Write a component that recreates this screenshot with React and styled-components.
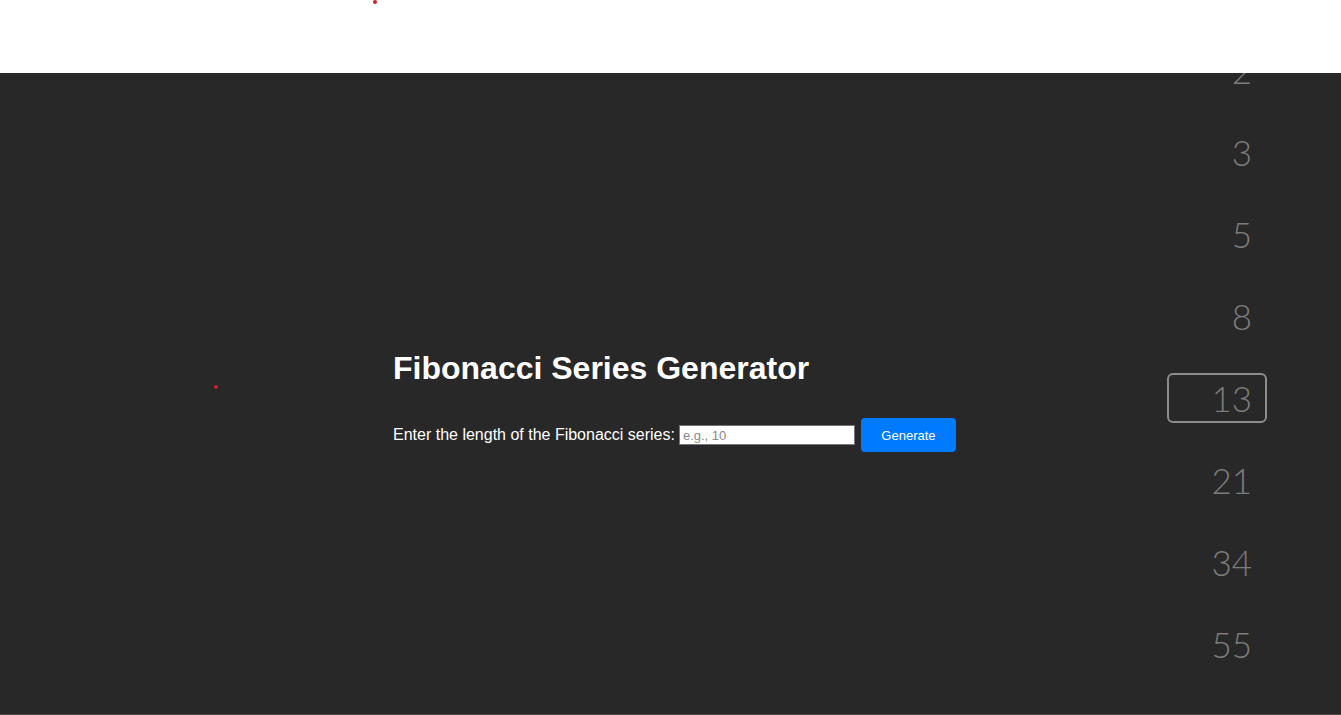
import React, { useState } from 'react';
import styled, { createGlobalStyle } from 'styled-components';

const GlobalStyle = createGlobalStyle`
  html, body {
    margin: 0;
    padding: 0;
    background: #ffffff;
    font-family: "Liberation Sans", Arial, sans-serif;
  }
`;

const series = [2, 3, 5, 8, 13, 21, 34, 55, 89];

const App = () => {
  const [length, setLength] = useState('');

  return (
    <>
      <GlobalStyle />
      <TopBar>
        <Dot $x={373} $y={0} />
      </TopBar>
      <Stage>
        <Dot $x={214} $y={312} />
        <Content>
          <Title>Fibonacci Series Generator</Title>
          <FormRow>
            <Label htmlFor="len">Enter the length of the Fibonacci series:</Label>
            <LengthInput
              id="len"
              type="number"
              placeholder="e.g., 10"
              value={length}
              onChange={(e) => setLength(e.target.value)}
            />
            <GenerateButton type="button">Generate</GenerateButton>
          </FormRow>
        </Content>
        <NumberColumn>
          {series.map((n) => (
            <NumberItem key={n}>
              <NumberBox $active={n === 13}>{n}</NumberBox>
            </NumberItem>
          ))}
        </NumberColumn>
      </Stage>
    </>
  );
};

export default App;

const TopBar = styled.header`
  position: relative;
  height: 73px;
  background: #ffffff;
`;

const Dot = styled.span`
  position: absolute;
  left: ${(p) => p.$x}px;
  top: ${(p) => p.$y}px;
  width: 4px;
  height: 4px;
  border-radius: 50%;
  background: #d11f24;
`;

const Stage = styled.main`
  position: relative;
  display: flex;
  height: 641px;
  overflow: hidden;
  background: #282828;
  border-bottom: 1px solid #4a4a42;
`;

const Content = styled.section`
  flex: 1;
  padding: 277px 0 0 393px;
`;

const Title = styled.h1`
  margin: 0;
  color: #ffffff;
  font-size: 32px;
  line-height: 37px;
  font-weight: bold;
`;

const FormRow = styled.div`
  display: flex;
  align-items: center;
  margin-top: 31px;
  height: 34px;
`;

const Label = styled.label`
  color: #ffffff;
  font-size: 16px;
  margin-right: 4px;
`;

const LengthInput = styled.input`
  box-sizing: border-box;
  width: 176px;
  height: 20px;
  padding: 1px 3px;
  border: 1px solid #767676;
  background: #ffffff;
  font-family: "Liberation Sans", Arial, sans-serif;
  font-size: 13px;
  color: #222;
  margin-right: 6px;
  -moz-appearance: textfield;

  &::placeholder {
    color: #8a8a8a;
  }

  &::-webkit-inner-spin-button,
  &::-webkit-outer-spin-button {
    -webkit-appearance: none;
    margin: 0;
  }
`;

const GenerateButton = styled.button`
  height: 34px;
  width: 95px;
  padding: 0;
  border: none;
  border-radius: 4px;
  background: #007bff;
  color: #ffffff;
  font-family: "Liberation Sans", Arial, sans-serif;
  font-size: 13px;
  cursor: pointer;
`;

const NumberColumn = styled.aside`
  display: flex;
  flex-direction: column;
  align-self: flex-start;
  width: 100px;
  margin: -44px 74px 0 0;
`;

const NumberItem = styled.div`
  display: flex;
  align-items: center;
  height: 82px;
`;

const NumberBox = styled.div`
  box-sizing: border-box;
  width: 100px;
  height: 50px;
  display: flex;
  align-items: center;
  justify-content: flex-end;
  padding-right: 13px;
  border: 2px solid ${(p) => (p.$active ? '#8c8c8c' : 'transparent')};
  border-radius: 6px;
  color: #7c7c7c;
  font-family: Lato, "Noto Sans", sans-serif;
  font-weight: 300;
  font-size: 35px;
`;
